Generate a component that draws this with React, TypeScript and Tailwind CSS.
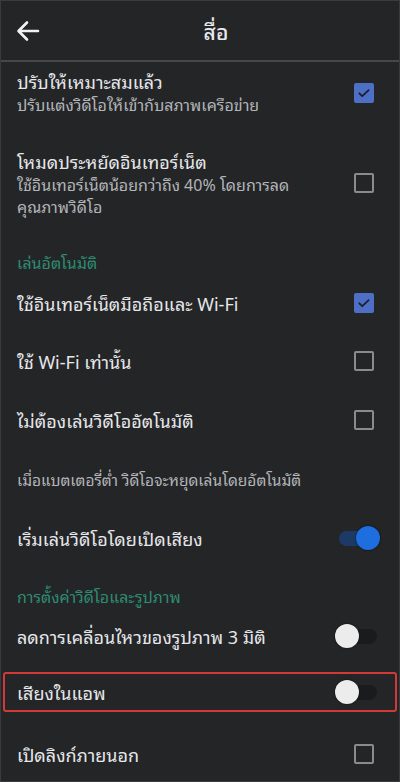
import React from 'react';

const font = { fontFamily: '"Noto Sans Thai Looped", "Noto Sans Thai", "Noto Sans", "Liberation Sans", sans-serif' };

const Checkbox = ({ checked }: { checked?: boolean }) =>
  checked ? (
    <div className="w-[20px] h-[20px] rounded-[2px] bg-[#4e6fc6] flex items-center justify-center shrink-0">
      <svg width="14" height="14" viewBox="0 0 24 24" fill="none" stroke="#1b1f2e" strokeWidth="3" strokeLinecap="round" strokeLinejoin="round">
        <path d="M4 12.5l5 5L20 7" />
      </svg>
    </div>
  ) : (
    <div className="w-[20px] h-[20px] rounded-[2px] border-2 border-[#8a8b8d] shrink-0" />
  );

const Toggle = ({ on }: { on?: boolean }) => (
  <div className="relative w-[45px] h-[24px] shrink-0 flex items-center">
    <div className={`w-[38px] h-[15px] rounded-full ml-[4px] ${on ? 'bg-[#1d3a66]' : 'bg-[#1a1b1c]'}`} />
    <div
      className={`absolute top-0 w-[24px] h-[24px] rounded-full ${on ? 'right-0 bg-[#1f6ee0]' : 'left-0 bg-[#ececec]'} shadow-[0_0_2px_rgba(0,0,0,0.8)]`}
    />
  </div>
);

const Row = ({ title, sub, control, className = '', toggle }: { title: string; sub?: string; control: React.ReactNode; className?: string; toggle?: boolean }) => (
  <div className={`flex items-center justify-between pl-[16px] ${toggle ? 'pr-[19px]' : 'pr-[25px]'} ${className}`}>
    <div className="flex-1 pr-8">
      <div className="text-[18px] leading-[24px] text-[#e6e7ea]">{title}</div>
      {sub && <div className="text-[16px] leading-[22.5px] text-[#b3b5b9]">{sub}</div>}
    </div>
    {control}
  </div>
);

const Section = ({ label, className = '' }: { label: string; className?: string }) => (
  <div className={`pl-[16px] text-[16px] leading-[20px] text-[#2e8c72] flex ${className}`}>{label}</div>
);

export default function App() {
  return (
    <div className="w-[400px] h-[782px] bg-[#242527] border border-[#3a3b3d] overflow-hidden flex flex-col" style={font}>
      {/* Header */}
      <div className="h-[61px] flex items-center relative border-b-2 border-[#47484a] shrink-0">
        <svg className="ml-[15px]" width="24" height="22" viewBox="0 0 24 22" fill="none" stroke="#f2f2f2" strokeWidth="2.6" strokeLinecap="round" strokeLinejoin="round">
          <path d="M22 11H3M11 2.5L2.5 11 11 19.5" />
        </svg>
        <div className="absolute left-0 right-0 text-center text-[21px] font-medium text-[#e8e9ec] pl-[32px]">สื่อ</div>
      </div>

      <Row className="h-[61px] shrink-0" title="ปรับให้เหมาะสมแล้ว" sub="ปรับแต่งวิดีโอให้เข้ากับสภาพเครือข่าย" control={<Checkbox checked />} />
      <Row className="h-[120px] shrink-0" title="โหมดประหยัดอินเทอร์เน็ต" sub="ใช้อินเทอร์เน็ตน้อยกว่าถึง 40% โดยการลดคุณภาพวิดีโอ" control={<Checkbox />} />

      <Section className="mt-[6px] h-[26px] items-center shrink-0" label="เล่นอัตโนมัติ" />
      <Row className="h-[56px] shrink-0" title="ใช้อินเทอร์เน็ตมือถือและ Wi-Fi" control={<Checkbox checked />} />
      <Row className="h-[59px] shrink-0" title="ใช้ Wi-Fi เท่านั้น" control={<Checkbox />} />
      <Row className="h-[59px] shrink-0" title="ไม่ต้องเล่นวิดีโออัตโนมัติ" control={<Checkbox />} />

      <div className="h-[62px] shrink-0 flex items-center pl-[16px] text-[15.5px] text-[#b3b5b9]">เมื่อแบตเตอรี่ต่ำ วิดีโอจะหยุดเล่นโดยอัตโนมัติ</div>
      <Row toggle className="h-[54px] shrink-0" title="เริ่มเล่นวิดีโอโดยเปิดเสียง" control={<Toggle on />} />

      <Section className="h-[41px] items-end shrink-0" label="การตั้งค่าวิดีโอและรูปภาพ" />
      <Row toggle className="h-[60px] shrink-0" title="ลดการเคลื่อนไหวของรูปภาพ 3 มิติ" control={<Toggle />} />

      <div className="mt-[6px] mx-[2px] h-[40px] shrink-0 border-2 border-[#d23a3a] rounded-[3px] flex items-center justify-between pl-[12px] pr-[15px]">
        <div className="text-[18px] text-[#e6e7ea]">เสียงในแอพ</div>
        <Toggle />
      </div>

      <Row className="h-[60px] mt-[12px] shrink-0" title="เปิดลิงก์ภายนอก" control={<Checkbox />} />
    </div>
  );
}
